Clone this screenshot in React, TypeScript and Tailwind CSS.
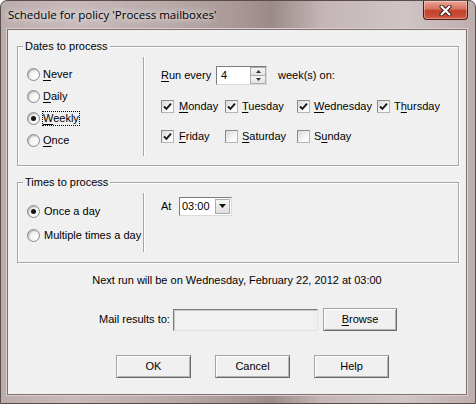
import React from "react";

function U({ children }: { children: React.ReactNode }) {
  return <span className="underline decoration-1 underline-offset-[2px]">{children}</span>;
}

function Radio({ checked }: { checked?: boolean }) {
  return (
    <span className="flex h-[13px] w-[13px] shrink-0 items-center justify-center rounded-full border border-[#8a8a8a] bg-[radial-gradient(circle_at_65%_65%,#ffffff_0%,#f3f3f3_45%,#cfcfcf_100%)] shadow-[inset_1px_1px_1px_rgba(0,0,0,0.18)]">
      {checked && <span className="h-[5px] w-[5px] rounded-full bg-[#151515]" />}
    </span>
  );
}

function Check({ checked }: { checked?: boolean }) {
  return (
    <span className="flex h-[13px] w-[13px] shrink-0 items-center justify-center border border-[#8a8a8a] border-b-[#b5b5b5] border-r-[#b5b5b5] bg-[linear-gradient(135deg,#d8d8d8_0%,#f6f6f6_60%,#ffffff_100%)]">
      {checked && (
        <svg width="9" height="9" viewBox="0 0 9 9">
          <path d="M1 4.3 L3.4 6.9 L8 1.6" fill="none" stroke="#1a1a1a" strokeWidth="1.9" />
        </svg>
      )}
    </span>
  );
}

function Btn({ children, className }: { children: React.ReactNode; className: string }) {
  return (
    <div
      className={
        "flex items-center justify-center border border-[#a3a3a3] border-b-[#6a6a6a] border-r-[#6a6a6a] bg-[#f0f0f0] shadow-[inset_1px_1px_0_#ffffff,inset_-1px_-1px_0_#b4b4b4] " +
        className
      }
    >
      {children}
    </div>
  );
}

export default function App() {
  return (
    <div className="flex h-[404px] w-[476px] flex-col overflow-hidden rounded-t-[7px] border border-[#5b4c4c] bg-[linear-gradient(90deg,#bcadad_0%,#c8baba_15%,#b9aaaa_35%,#a99797_50%,#9c8a8a_57%,#c4b6b6_68%,#d0c4c4_85%,#bdaeae_100%)] font-['Liberation_Sans',Arial,sans-serif] text-[11px] text-black">
      {/* Title bar */}
      <div className="flex h-[28px] shrink-0 items-start justify-between">
        <div className="pl-[7px] pt-[6px] font-['Open_Sans','Noto_Sans',sans-serif] text-[11.5px] leading-[16px] text-black [text-shadow:0_0_6px_rgba(255,255,255,0.9),0_0_10px_rgba(255,255,255,0.7)]">
          Schedule for policy 'Process mailboxes'
        </div>
        <div className="mr-[7px] flex h-[19px] w-[45px] items-center justify-center rounded-b-[4px] border border-t-0 border-[#4e1a12] bg-[linear-gradient(180deg,#eaa898_0%,#d9745f_42%,#c33f29_55%,#cf5a42_100%)] shadow-[inset_0_0_0_1px_rgba(255,255,255,0.35)]">
          <svg width="13" height="11" viewBox="0 0 13 11">
            <path d="M2.5 1.5 L10.5 9.5 M10.5 1.5 L2.5 9.5" stroke="#3b1510" strokeWidth="4" strokeLinecap="round" />
            <path d="M2.5 1.5 L10.5 9.5 M10.5 1.5 L2.5 9.5" stroke="#ffffff" strokeWidth="2.2" strokeLinecap="round" />
          </svg>
        </div>
      </div>

      {/* Client area */}
      <div className="ml-[6px] flex h-[366px] w-[460px] shrink-0 flex-col border border-[#7f7070] bg-[#f0f0f0] shadow-[0_0_0_1px_#ddd1d1]">
        {/* Dates to process */}
        <div className="ml-[9px] mt-[16px] flex h-[120px] w-[442px] shrink-0 flex-col border border-[#a6a6a6] shadow-[inset_1px_1px_0_#ffffff,1px_1px_0_#ffffff]">
          <div className="-mt-[7px] ml-[5px] w-fit bg-[#f0f0f0] px-[2px] leading-[13px]">Dates to process</div>
          <div className="flex flex-1">
            <div className="flex w-[125px] flex-col pl-[9px] pt-[10px]">
              <div className="flex h-[22px] items-center gap-[3px]">
                <Radio />
                <span><U>N</U>ever</span>
              </div>
              <div className="flex h-[22px] items-center gap-[3px]">
                <Radio />
                <span><U>D</U>aily</span>
              </div>
              <div className="flex h-[22px] items-center gap-[2px]">
                <Radio checked />
                <span className="border border-dotted border-black leading-[13px]"><U>W</U>eekly</span>
              </div>
              <div className="flex h-[22px] items-center gap-[3px]">
                <Radio />
                <span><U>O</U>nce</span>
              </div>
            </div>
            <div className="mt-[4px] h-[99px] w-[2px] border-l border-[#a6a6a6] bg-white" />
            <div className="flex flex-1 flex-col pl-[16px] pt-[13px]">
              <div className="flex h-[19px] items-center">
                <span className="w-[55px]"><U>R</U>un every</span>
                <div className="flex h-[19px] w-[51px] border border-[#7c7c7c] border-b-[#dadada] border-r-[#dadada] bg-white">
                  <div className="flex-1 pl-[4px] leading-[17px]">4</div>
                  <div className="flex w-[16px] flex-col">
                    <div className="flex flex-1 items-center justify-center border border-[#acacac] bg-[linear-gradient(180deg,#f6f6f6,#e2e2e2)]">
                      <svg width="5" height="3" viewBox="0 0 5 3"><path d="M0 3 L2.5 0 L5 3 Z" fill="#333" /></svg>
                    </div>
                    <div className="flex flex-1 items-center justify-center border border-t-0 border-[#acacac] bg-[linear-gradient(180deg,#f6f6f6,#e2e2e2)]">
                      <svg width="5" height="3" viewBox="0 0 5 3"><path d="M0 0 L2.5 3 L5 0 Z" fill="#333" /></svg>
                    </div>
                  </div>
                </div>
                <span className="ml-[11px]">week(s) on:</span>
              </div>
              <div className="mt-[13px] grid h-[16px] grid-cols-[64px_72px_80px_auto] items-center">
                <div className="flex items-center gap-[5px]"><Check checked /><span><U>M</U>onday</span></div>
                <div className="flex items-center gap-[4px]"><Check checked /><span><U>T</U>uesday</span></div>
                <div className="flex items-center gap-[4px]"><Check checked /><span><U>W</U>ednesday</span></div>
                <div className="flex items-center gap-[4px]"><Check checked /><span>T<U>h</U>ursday</span></div>
              </div>
              <div className="mt-[14px] grid h-[16px] grid-cols-[64px_72px_80px_auto] items-center">
                <div className="flex items-center gap-[5px]"><Check checked /><span><U>F</U>riday</span></div>
                <div className="flex items-center gap-[4px]"><Check /><span><U>S</U>aturday</span></div>
                <div className="flex items-center gap-[4px]"><Check /><span>S<U>u</U>nday</span></div>
              </div>
            </div>
          </div>
        </div>

        {/* Times to process */}
        <div className="ml-[9px] mt-[16px] flex h-[81px] w-[442px] shrink-0 flex-col border border-[#a6a6a6] shadow-[inset_1px_1px_0_#ffffff,1px_1px_0_#ffffff]">
          <div className="-mt-[7px] ml-[5px] w-fit bg-[#f0f0f0] px-[2px] leading-[13px]">Times to process</div>
          <div className="flex flex-1">
            <div className="flex w-[125px] flex-col pl-[9px] pt-[10px]">
              <div className="flex h-[24px] items-center gap-[4px]">
                <Radio checked />
                <span>Once a day</span>
              </div>
              <div className="flex h-[24px] items-center gap-[4px]">
                <Radio />
                <span>Multiple times a day</span>
              </div>
            </div>
            <div className="mt-[4px] h-[59px] w-[2px] border-l border-[#a6a6a6] bg-white" />
            <div className="flex flex-1 items-start pl-[16px] pt-[8px]">
              <div className="flex h-[18px] items-center">
                <span className="w-[18px]">At</span>
                <div className="flex h-[19px] w-[53px] border border-[#7c7c7c] border-b-[#dadada] border-r-[#dadada] bg-white">
                  <div className="flex-1 pl-[2px] leading-[17px]">03:00</div>
                  <div className="m-[1px] flex w-[15px] items-center justify-center border border-[#acacac] bg-[linear-gradient(180deg,#f6f6f6,#dedede)]">
                    <svg width="7" height="4" viewBox="0 0 7 4"><path d="M0 0 L3.5 4 L7 0 Z" fill="#111" /></svg>
                  </div>
                </div>
              </div>
            </div>
          </div>
        </div>

        <div className="mt-[11px] text-center leading-[13px]">Next run will be on Wednesday, February 22, 2012 at 03:00</div>

        <div className="ml-[91px] mt-[21px] flex h-[23px] items-center">
          <span className="w-[74px]">Mail results to:</span>
          <div className="h-[22px] w-[145px] border border-[#7c7c7c] border-b-[#e2e2e2] border-r-[#e2e2e2] bg-[#f1f1f1] shadow-[inset_1px_1px_0_#c8c8c8]" />
          <Btn className="ml-[5px] h-[23px] w-[74px]"><span><U>B</U>rowse</span></Btn>
        </div>

        <div className="ml-[108px] mt-[24px] flex gap-[24px]">
          <Btn className="h-[23px] w-[75px]">OK</Btn>
          <Btn className="h-[23px] w-[75px]">Cancel</Btn>
          <Btn className="h-[23px] w-[75px]">Help</Btn>
        </div>
      </div>
    </div>
  );
}
